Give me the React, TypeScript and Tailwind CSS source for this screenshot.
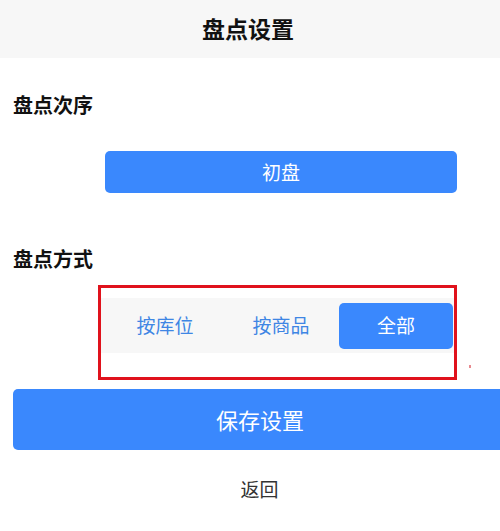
const font = { fontFamily: '"Noto Sans CJK SC", "Noto Sans", sans-serif' };

export default function App() {
  const modes = ["按库位", "按商品", "全部"];
  const active = 2;

  return (
    <div className="w-[500px] h-[531px] bg-white overflow-hidden" style={font}>
      <div className="h-[58px] bg-[#f7f7f7] flex items-center justify-center">
        <h1 className="text-[23px] leading-[28px] font-bold text-[#111] -ml-[4px] -mt-[2px]">盘点设置</h1>
      </div>

      <h2 className="mt-[33px] ml-[13px] text-[20px] leading-[28px] font-bold text-[#111]">盘点次序</h2>

      <div className="mt-[32px] ml-[105px] w-[352px] h-[42px] rounded-[5px] bg-[#3a88fd] flex items-center justify-center text-white text-[19px]">
        初盘
      </div>

      <h2 className="mt-[52px] ml-[13px] text-[20px] leading-[28px] font-bold text-[#111]">盘点方式</h2>

      <div className="relative mt-[12px]">
        <div className="ml-[98px] w-[359px] h-[95px] border-[3px] border-[#e0121c] pt-[10px]">
          <div className="h-[55px] bg-[#f7f7f7] flex items-center pl-[6px]">
            {modes.map((m, i) => (
              <div
                key={m}
                className={
                  i === active
                    ? "w-[114px] h-[46px] rounded-[5px] bg-[#3a88fd] text-white text-[19px] flex items-center justify-center"
                    : "w-[116px] h-[46px] text-[#3f86e4] text-[19px] flex items-center justify-center"
                }
              >
                {m}
              </div>
            ))}
          </div>
        </div>
        <span className="absolute left-[469px] top-[80px] w-[2px] h-[3px] bg-[#e88a8f]" />
      </div>

      <div className="mt-[9px] ml-[13px] w-[494px] h-[61px] rounded-l-[5px] bg-[#3a88fd] flex items-center justify-center text-white text-[22px]">
        保存设置
      </div>

      <div className="mt-[26px] text-center text-[19px] leading-[26px] text-[#333] pl-[19px]">返回</div>
    </div>
  );
}
